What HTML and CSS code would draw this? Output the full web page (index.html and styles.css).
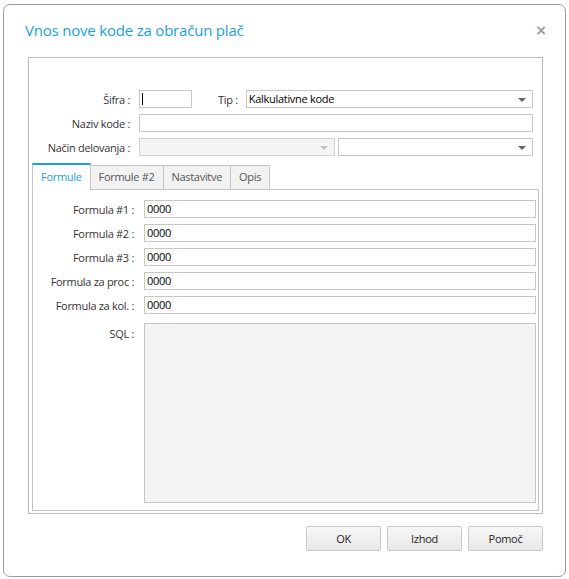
FILE: index.html
```html
<!DOCTYPE html>
<html lang="sl">
<head>
    <meta charset="UTF-8">
    <title>Vnos nove kode za obračun plač</title>
    <link rel="stylesheet" href="styles.css">
</head>
<body>
    <div class="window">
        <div class="titlebar">
            <span class="title">Vnos nove kode za obračun plač</span>
            <span class="close">×</span>
        </div>

        <div class="group">
            <div class="fields">
                <div class="row">
                    <label class="label">Šifra :</label>
                    <div class="input input-code"><span class="caret"></span></div>
                    <label class="label-tip">Tip :</label>
                    <div class="input select">Kalkulativne kode<span class="arrow"></span></div>
                </div>
                <div class="row">
                    <label class="label">Naziv kode :</label>
                    <div class="input grow"></div>
                </div>
                <div class="row">
                    <label class="label">Način delovanja :</label>
                    <div class="input select disabled"><span class="arrow"></span></div>
                    <div class="input select"><span class="arrow"></span></div>
                </div>
            </div>

            <div class="tabs">
                <div class="tab active">Formule</div>
                <div class="tab">Formule #2</div>
                <div class="tab">Nastavitve</div>
                <div class="tab">Opis</div>
            </div>

            <div class="tab-panel">
                <div class="frow">
                    <label class="flabel">Formula #1 :</label>
                    <div class="input grow">0000</div>
                </div>
                <div class="frow">
                    <label class="flabel">Formula #2 :</label>
                    <div class="input grow">0000</div>
                </div>
                <div class="frow">
                    <label class="flabel">Formula #3 :</label>
                    <div class="input grow">0000</div>
                </div>
                <div class="frow">
                    <label class="flabel">Formula za proc :</label>
                    <div class="input grow">0000</div>
                </div>
                <div class="frow">
                    <label class="flabel">Formula za kol. :</label>
                    <div class="input grow">0000</div>
                </div>
                <div class="frow sql-row">
                    <label class="flabel">SQL :</label>
                    <div class="sql"></div>
                </div>
            </div>
        </div>

        <div class="buttons">
            <button class="btn">OK</button>
            <button class="btn">Izhod</button>
            <button class="btn">Pomoč</button>
        </div>
    </div>
</body>
</html>
```

FILE: styles.css
```css
* {
    margin: 0;
    padding: 0;
    box-sizing: border-box;
}

body {
    background: #fff;
    color: #333;
    font-family: 'Open Sans', 'Segoe UI', sans-serif;
    font-size: 11px;
    letter-spacing: -0.3px;
}

.window {
    margin: 4px 0 0 3px;
    width: 563px;
    height: 573px;
    border: 1px solid #9c9c9c;
    border-radius: 7px;
    background: #fff;
}

.titlebar {
    height: 52px;
    display: flex;
    align-items: center;
    justify-content: space-between;
    padding: 0 18px 2px 21px;
}

.title {
    font-size: 15px;
    color: #1a9fe0;
    letter-spacing: -0.2px;
}

.close {
    font-family: 'DejaVu Sans', sans-serif;
    font-size: 14px;
    color: #9a9a9a;
    font-weight: bold;
    letter-spacing: 0;
}

.group {
    margin: 0 22px 0 24px;
    border: 1px solid #b9b9b9;
    padding: 32px 2px 2px 3px;
}

.fields {
    display: flex;
    flex-direction: column;
    gap: 6px;
    margin-right: 7px;
}

.row {
    display: flex;
    align-items: center;
    height: 18px;
}

.label {
    width: 98px;
    text-align: right;
    margin-right: 9px;
    white-space: nowrap;
}

.label-tip {
    margin: 0 8px 0 26px;
}

.input {
    height: 18px;
    border: 1px solid #c6c6c6;
    background: #fff;
    color: #000;
    padding: 0 2px;
    line-height: 16px;
    position: relative;
    white-space: nowrap;
}

.grow {
    flex: 1;
}

.input-code {
    width: 53px;
}

.caret {
    position: absolute;
    left: 2px;
    top: 2px;
    width: 1px;
    height: 12px;
    background: #000;
}

.select {
    flex: 1;
}

.select + .select {
    margin-left: 3px;
}

.disabled {
    background: #f4f4f4;
    border-color: #d2d2d2;
}

.arrow {
    position: absolute;
    right: 6px;
    top: 7px;
    border-left: 4px solid transparent;
    border-right: 4px solid transparent;
    border-top: 4px solid #666;
}

.disabled .arrow {
    border-top-color: #c4c4c4;
}

.tabs {
    display: flex;
    align-items: flex-end;
    height: 26px;
    margin-top: 7px;
}

.tab {
    height: 24px;
    padding: 0 8px;
    border: 1px solid #c4c4c4;
    border-bottom: none;
    background: #f2f2f2;
    color: #555;
    line-height: 22px;
    margin-left: -1px;
}

.tab.active {
    height: 27px;
    margin-left: 0;
    margin-bottom: -1px;
    border-top: 2px solid #1a9fe0;
    background: #fff;
    color: #1a9fe0;
    padding: 0 8px;
    position: relative;
    line-height: 24px;
}

.tab-panel {
    border: 1px solid #c4c4c4;
    margin-right: 1px;
    padding: 10px 2px 7px 0;
    display: flex;
    flex-direction: column;
    gap: 6px;
}

.frow {
    display: flex;
    align-items: center;
    height: 18px;
}

.flabel {
    width: 101px;
    text-align: right;
    margin-right: 10px;
    white-space: nowrap;
}

.sql-row {
    height: 180px;
    align-items: flex-start;
    margin-top: 3px;
}

.sql-row .flabel {
    margin-top: 3px;
}

.sql {
    flex: 1;
    height: 180px;
    border: 1px solid #c6c6c6;
    background: #f4f4f4;
}

.buttons {
    display: flex;
    justify-content: flex-end;
    gap: 6px;
    padding: 12px 22px 0 0;
}

.btn {
    width: 75px;
    height: 25px;
    border: 1px solid #c8c8c8;
    border-radius: 2px;
    background: linear-gradient(#f7f7f7, #e8e8e8);
    font-family: 'Open Sans', 'Segoe UI', sans-serif;
    font-size: 11px;
    letter-spacing: -0.3px;
    color: #222;
}
```
